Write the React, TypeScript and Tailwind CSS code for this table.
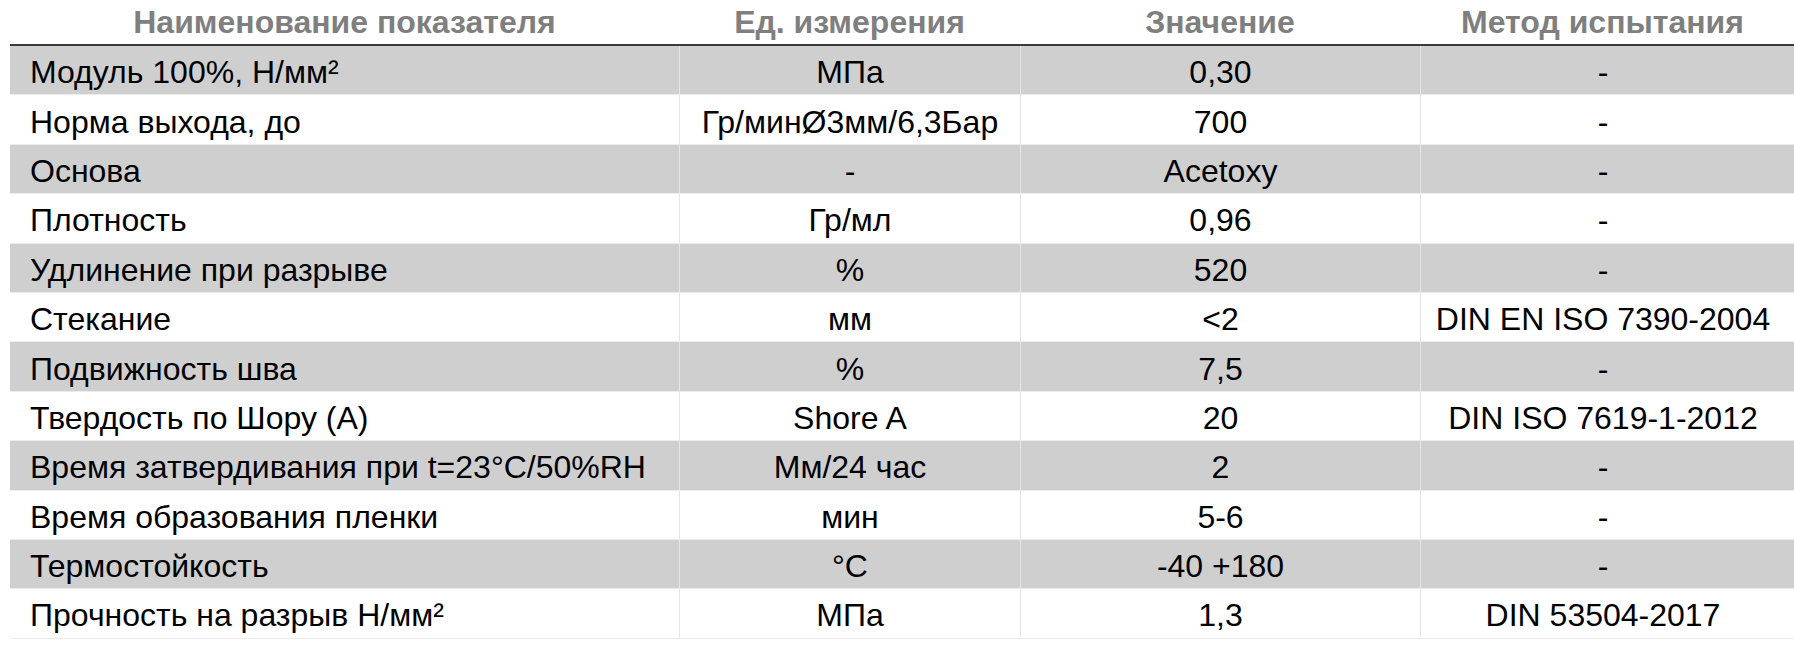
const rows = [
  ['Модуль 100%, Н/мм²', 'МПа', '0,30', '-'],
  ['Норма выхода, до', 'Гр/минØ3мм/6,3Бар', '700', '-'],
  ['Основа', '-', 'Acetoxy', '-'],
  ['Плотность', 'Гр/мл', '0,96', '-'],
  ['Удлинение при разрыве', '%', '520', '-'],
  ['Стекание', 'мм', '<2', 'DIN EN ISO 7390-2004'],
  ['Подвижность шва', '%', '7,5', '-'],
  ['Твердость по Шору (А)', 'Shore A', '20', 'DIN ISO 7619-1-2012'],
  ['Время затвердивания при t=23°C/50%RH', 'Мм/24 час', '2', '-'],
  ['Время образования пленки', 'мин', '5-6', '-'],
  ['Термостойкость', '°C', '-40 +180', '-'],
  ['Прочность на разрыв Н/мм²', 'МПа', '1,3', 'DIN 53504-2017'],
];

const headers = ['Наименование показателя', 'Ед. измерения', 'Значение', 'Метод испытания'];

const cols = 'grid grid-cols-[669px_341px_400px_365px]';

export default function App() {
  return (
    <div className="h-[648px] w-[1794px] overflow-hidden bg-white pl-[10px] font-['Liberation_Sans',Arial,sans-serif] text-black">
      <div className={`${cols} h-[46px] border-b-2 border-[#3a3a3a]`}>
        {headers.map((h) => (
          <div
            key={h}
            className="flex items-start justify-center pt-[4px] text-[32px] font-bold leading-[36px] text-[#7f7f7f] whitespace-nowrap"
          >
            {h}
          </div>
        ))}
      </div>
      {rows.map((r, idx) => (
        <div
          key={r[0]}
          className={`${cols} h-[49.4px] border-b border-[#ececec] ${idx % 2 === 0 ? 'bg-[#d0cfd0]' : 'bg-white'}`}
        >
          {r.map((c, i) => (
            <div
              key={i}
              className={`flex items-center pt-[4px] text-[32px] leading-none whitespace-nowrap ${
                i === 0 ? 'justify-start pl-[20px]' : 'justify-center border-l border-[#e6e6e6]'
              }`}
            >
              {c}
            </div>
          ))}
        </div>
      ))}
    </div>
  );
}
